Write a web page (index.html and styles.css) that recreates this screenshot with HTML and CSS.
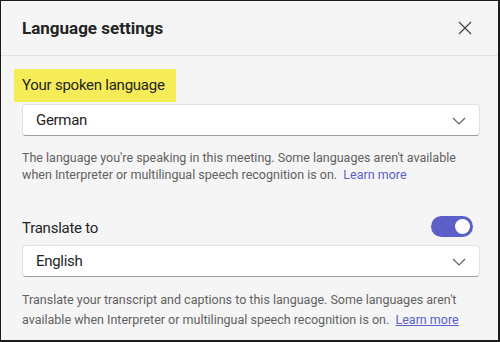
FILE: index.html
```html
<!DOCTYPE html>
<html>

<head>
    <title>Language settings</title>
    <link rel="stylesheet" href="styles.css">
</head>

<body>
    <div class="dialog">
        <div class="dialog-header">
            <h1>Language settings</h1>
            <button class="close-btn" aria-label="Close">
                <svg width="14" height="14" viewBox="0 0 14 14">
                    <path d="M1 1 L13 13 M13 1 L1 13" stroke="#424242" stroke-width="1.2" fill="none" />
                </svg>
            </button>
        </div>

        <div class="dialog-body">
            <div class="field">
                <label class="field-label highlight">Your spoken language</label>
                <div class="select">
                    <span>German</span>
                    <svg class="chevron" width="14" height="8" viewBox="0 0 14 8">
                        <path d="M1 1 L7 7 L13 1" stroke="#616161" stroke-width="1.2" fill="none" />
                    </svg>
                </div>
                <p class="hint">The language you're speaking in this meeting. Some languages aren't available<br>when Interpreter or multilingual speech recognition is on. &nbsp;<a href="#">Learn more</a></p>
            </div>

            <div class="field field-translate">
                <div class="field-row">
                    <label class="field-label">Translate to</label>
                    <span class="toggle on"><span class="knob"></span></span>
                </div>
                <div class="select">
                    <span>English</span>
                    <svg class="chevron" width="14" height="8" viewBox="0 0 14 8">
                        <path d="M1 1 L7 7 L13 1" stroke="#616161" stroke-width="1.2" fill="none" />
                    </svg>
                </div>
                <p class="hint hint-loose">Translate your transcript and captions to this language. Some languages aren't<br>available when Interpreter or multilingual speech recognition is on. &nbsp;<a href="#" class="underline">Learn more</a></p>
            </div>
        </div>
    </div>
</body>

</html>
```

FILE: styles.css
```css
body {
    margin: 0;
    font-family: Roboto, "Noto Sans", sans-serif;
    background-color: #f5f5f5;
}

.dialog {
    width: 500px;
    height: 342px;
    box-sizing: border-box;
    background-color: #f5f5f5;
    border-top: 1px solid #1b1b1b;
    border-left: 1px solid #1b1b1b;
    border-right: 2px solid #1b1b1b;
    border-bottom: 2px solid #1b1b1b;
    overflow: hidden;
}

.dialog-header {
    height: 55px;
    display: flex;
    align-items: center;
    justify-content: space-between;
    padding: 0 26px 0 21px;
    border-bottom: 1px solid #e3e3e3;
    box-sizing: border-box;
}

.dialog-header h1 {
    margin: 0;
    font-size: 17px;
    font-weight: 700;
    color: #242424;
}

.close-btn {
    background: none;
    border: none;
    padding: 0;
    width: 14px;
    height: 14px;
    cursor: pointer;
    display: flex;
}

.dialog-body {
    padding: 13px 18px 0 21px;
}

.field-label {
    display: block;
    font-size: 15px;
    letter-spacing: -0.25px;
    color: #242424;
}

.highlight {
    display: inline-block;
    background-color: #f6ec57;
    margin-left: -8px;
    padding: 7px 11px 8px 8px;
}

.select {
    display: flex;
    align-items: center;
    justify-content: space-between;
    height: 30px;
    margin-top: 2px;
    padding: 0 13px 0 13px;
    background-color: #fff;
    border: 1px solid #e0e0e0;
    border-bottom-color: #9e9e9e;
    border-radius: 4px;
    font-size: 15px;
    letter-spacing: -0.3px;
    color: #242424;
}

.chevron {
    margin-top: 1px;
}

.hint {
    margin: 13px 0 0;
    font-size: 12.5px;
    line-height: 17px;
    color: #616161;
    white-space: nowrap;
}

.hint a {
    color: #5b5fc7;
    text-decoration: none;
}

.hint a.underline {
    text-decoration: underline;
}

.field-translate {
    margin-top: 31px;
}

.field-row {
    display: flex;
    align-items: center;
    justify-content: space-between;
    padding-right: 7px;
    height: 24px;
}

.field-row .field-label {
    padding-top: 4px;
}

.toggle {
    width: 42px;
    height: 21px;
    border-radius: 11px;
    background-color: #5b5fc7;
    display: flex;
    align-items: center;
    justify-content: flex-end;
    padding: 0 3px;
    box-sizing: border-box;
}

.knob {
    width: 15px;
    height: 15px;
    border-radius: 50%;
    background-color: #fff;
}

.field-translate .select {
    margin-top: 7px;
}

.hint-loose {
    margin-top: 13px;
    line-height: 20px;
}
```
